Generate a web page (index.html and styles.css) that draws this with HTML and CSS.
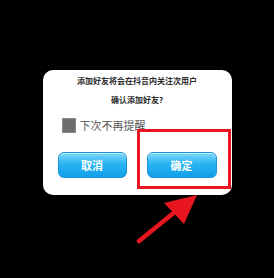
FILE: index.html
```html
<!DOCTYPE html>
<html lang="zh-CN">
<head>
    <meta charset="UTF-8">
    <title>确认添加好友</title>
    <link rel="stylesheet" href="styles.css">
</head>
<body>
    <div class="dialog">
        <div class="title">
            <p>添加好友将会在抖音内关注次用户</p>
            <p>确认添加好友?</p>
        </div>
        <label class="remember">
            <span class="box"></span>
            <span>下次不再提醒</span>
        </label>
        <div class="actions">
            <button class="btn">取消</button>
            <button class="btn">确定</button>
        </div>
        <div class="highlight"></div>
    </div>

    <!-- 指向确定按钮的箭头 -->
    <svg class="arrow" width="274" height="278" viewBox="0 0 274 278">
        <line x1="139" y1="241" x2="176" y2="211" stroke="#e8161e" stroke-width="4.5" stroke-linecap="round"/>
        <polygon points="197,195 164,203 184,224" fill="#e8161e"/>
    </svg>
</body>
</html>
```

FILE: styles.css
```css
body {
    margin: 0;
    width: 274px;
    height: 278px;
    background: #000;
    position: relative;
    overflow: hidden;
    font-family: "Noto Sans CJK SC", "Noto Sans", sans-serif;
}

.dialog {
    position: relative;
    box-sizing: border-box;
    width: 189px;
    height: 125px;
    margin: 70px auto 0;
    padding-top: 1px;
    background: #fff;
    border-radius: 10px;
}

.title p {
    margin: 0;
    font-size: 8px;
    line-height: 19px;
    font-weight: bold;
    color: #2b2b2b;
    text-align: center;
}

.remember {
    display: flex;
    align-items: center;
    gap: 4px;
    height: 16px;
    margin-top: 8px;
    padding-left: 19px;
    font-size: 11px;
    color: #555;
}

.box {
    width: 14px;
    height: 15px;
    background: #6e6e6e;
    border: 1px solid #8a8a8a;
    box-sizing: border-box;
}

.actions {
    display: flex;
    gap: 20px;
    margin-top: 19px;
    padding: 0 15px;
}

.btn {
    width: 70px;
    height: 26px;
    padding: 0;
    border: 1px solid #1a94dc;
    border-radius: 6px;
    background: linear-gradient(#7fd8fb, #2ab4f3 45%, #119fe9);
    color: #fff;
    font-family: inherit;
    font-size: 11px;
    font-weight: bold;
    box-shadow: inset 0 1px 0 rgba(255, 255, 255, 0.6);
}

.btn:first-child {
    width: 69px;
}

.highlight {
    position: absolute;
    left: 94px;
    top: 59px;
    width: 94px;
    height: 60px;
    box-sizing: border-box;
    border: 3px solid #e8161e;
}

.arrow {
    position: absolute;
    top: 0;
    left: 0;
}
```
